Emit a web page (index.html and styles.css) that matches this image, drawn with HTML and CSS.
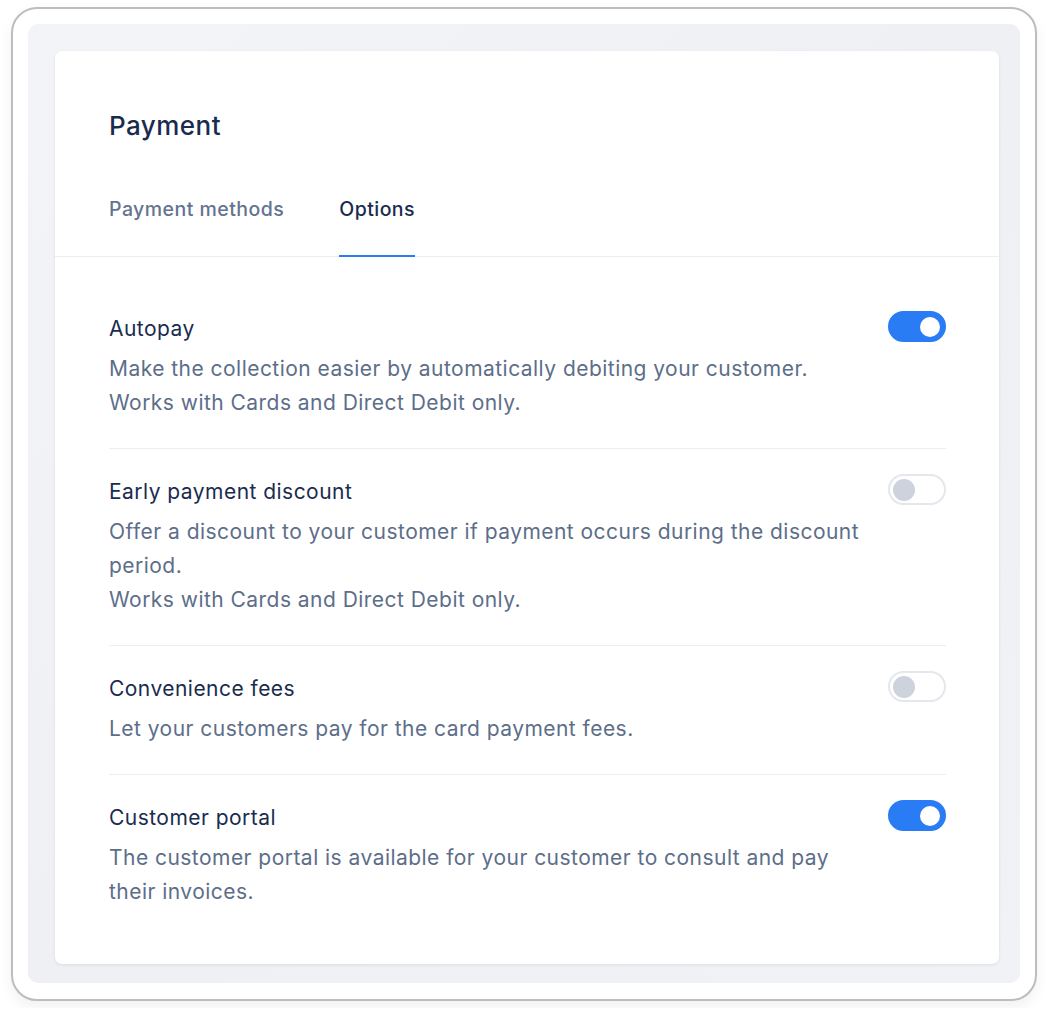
FILE: index.html
```html
<!DOCTYPE html>
<html lang="en">
<head>
  <meta charset="UTF-8">
  <meta name="viewport" content="width=device-width, initial-scale=1.0">
  <title>Payment - Options</title>
  <link rel="stylesheet" href="styles.css">
</head>
<body>
<div class="frame">
  <div class="backdrop">
    <div class="card">
      <div class="card-header">
        <h1>Payment</h1>
        <div class="tabs">
          <div class="tab">Payment methods</div>
          <div class="tab active">Options</div>
        </div>
      </div>

      <div class="options">
        <div class="option">
          <div class="option-text">
            <div class="option-title">Autopay</div>
            <p>Make the collection easier by automatically debiting your customer.<br>Works with Cards and Direct Debit only.</p>
          </div>
          <div class="toggle on"><span class="knob"></span></div>
        </div>

        <div class="option">
          <div class="option-text">
            <div class="option-title">Early payment discount</div>
            <p>Offer a discount to your customer if payment occurs during the discount period.<br>Works with Cards and Direct Debit only.</p>
          </div>
          <div class="toggle"><span class="knob"></span></div>
        </div>

        <div class="option">
          <div class="option-text">
            <div class="option-title">Convenience fees</div>
            <p>Let your customers pay for the card payment fees.</p>
          </div>
          <div class="toggle"><span class="knob"></span></div>
        </div>

        <div class="option">
          <div class="option-text">
            <div class="option-title">Customer portal</div>
            <p>The customer portal is available for your customer to consult and pay their invoices.</p>
          </div>
          <div class="toggle on"><span class="knob"></span></div>
        </div>
      </div>
    </div>
  </div>
</div>
</body>
</html>
```

FILE: styles.css
```css
body {
  margin: 0;
  padding: 7px 11px;
  background-color: #ffffff;
  font-family: Inter, "Noto Sans", sans-serif;
  letter-spacing: 0.029em;
}
.frame {
  width: 1026px;
  height: 994px;
  box-sizing: border-box;
  border: 2px solid #bdbdbd;
  border-radius: 26px;
  padding: 15px 15px 16px 15px;
  background-color: #ffffff;
  box-shadow: 0 6px 14px rgba(0, 0, 0, 0.06);
}
.backdrop {
  height: 100%;
  box-sizing: border-box;
  padding: 27px 21px 19px 27px;
  border-radius: 10px;
  background: linear-gradient(135deg, #f3f4f7 0%, #eef0f4 50%, #f1f2f6 100%);
}
.card {
  height: 100%;
  box-sizing: border-box;
  background-color: #ffffff;
  border-radius: 7px;
  box-shadow: 0 1px 3px rgba(30, 45, 80, 0.10);
}
.card-header {
  padding: 58px 54px 0;
  border-bottom: 1px solid #ebedf1;
}
h1 {
  margin: 0;
  font-size: 26px;
  line-height: 34px;
  font-weight: 500;
  color: #1a2c4e;
}
.tabs {
  display: flex;
  gap: 55px;
  margin-top: 54px;
}
.tab {
  font-size: 19.5px;
  line-height: 24px;
  font-weight: 500;
  color: #637390;
  padding-bottom: 34px;
  border-bottom: 2px solid transparent;
  margin-bottom: -1px;
}
.tab.active {
  color: #1a2c4e;
  border-bottom-color: #2a7cf5;
}
.options {
  padding: 29px 53px 28px 54px;
}
.option {
  display: flex;
  justify-content: space-between;
  align-items: flex-start;
  padding: 25px 0 28px;
  border-bottom: 1px solid #eceef2;
}
.option:first-child {
  padding-top: 25px;
}
.option:last-child {
  border-bottom: none;
}
.option-text {
  width: 762px;
}
.option-title {
  font-size: 21px;
  line-height: 36px;
  color: #1a2c4e;
}
.option p {
  margin: 5px 0 0;
  font-size: 21px;
  line-height: 34px;
  color: #5d6e89;
}
.toggle {
  width: 58px;
  height: 31px;
  box-sizing: border-box;
  border-radius: 16px;
  border: 2px solid #e4e7ec;
  background-color: #ffffff;
  display: flex;
  align-items: center;
  padding: 0 3px;
}
.knob {
  width: 22px;
  height: 22px;
  border-radius: 50%;
  background-color: #cdd3dc;
}
.toggle.on {
  background-color: #2a7cf5;
  border-color: #2a7cf5;
  justify-content: flex-end;
  padding: 0 4px;
}
.toggle.on .knob {
  width: 20px;
  height: 20px;
  background-color: #ffffff;
}
```
